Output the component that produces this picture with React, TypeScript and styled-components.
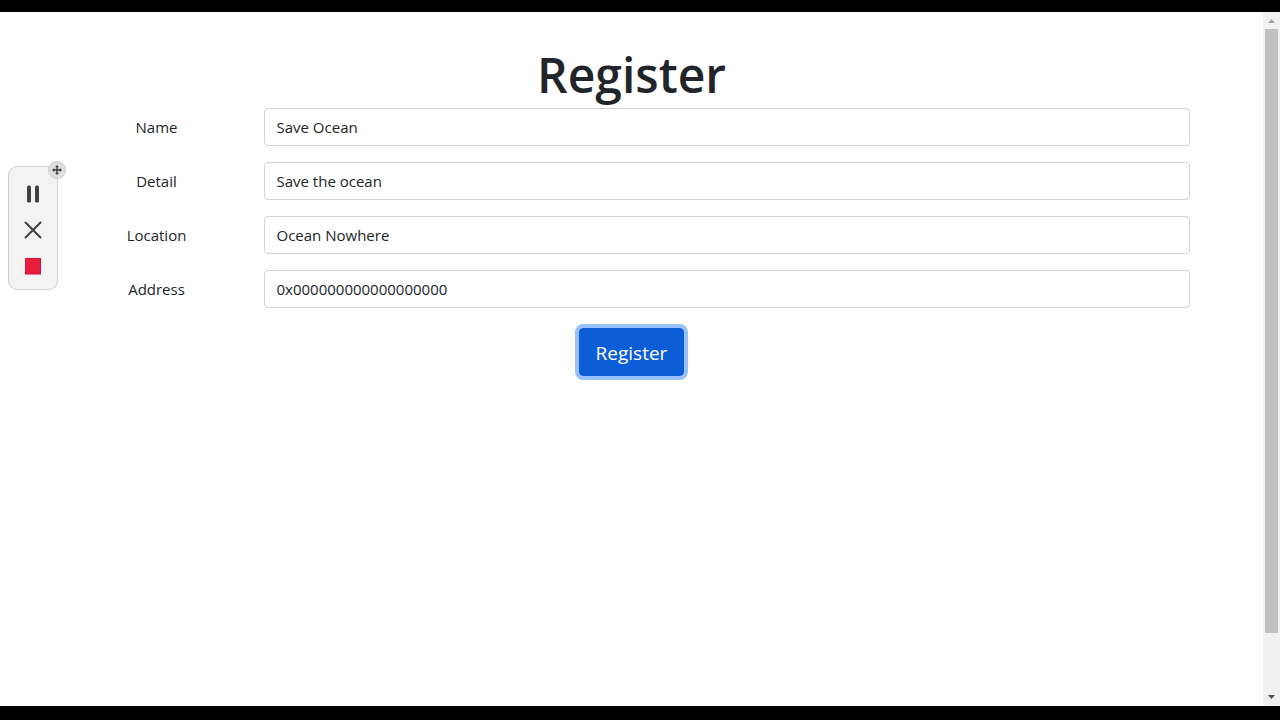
import React from "react";
import styled, { createGlobalStyle } from "styled-components";

const GlobalStyle = createGlobalStyle`
  *, *::before, *::after { box-sizing: border-box; }
  body {
    margin: 0;
    background: #fff;
    color: #212529;
    font-family: "Open Sans", "Noto Sans", sans-serif;
    font-size: 15px;
    line-height: 24px;
  }
`;

const Screen = styled.div`
  display: flex;
  min-height: 100vh;
  border-top: 12px solid #000;
  border-bottom: 14px solid #000;
  position: relative;
`;

const Page = styled.main`
  flex: 1;
  min-width: 0;
  padding-top: 32px;
`;

const Container = styled.form`
  max-width: 1140px;
  margin: 0 auto;
  text-align: center;
`;

const Title = styled.h1`
  margin: 0 0 2px;
  font-size: 48px;
  line-height: 62px;
  font-weight: 600;
`;

const Row = styled.div`
  display: grid;
  grid-template-columns: 1fr 5fr;
  margin-bottom: 16px;
`;

const Label = styled.label`
  padding: 7px 12px;
`;

const Field = styled.div`
  padding: 0 12px;
`;

const Input = styled.input`
  display: block;
  width: 100%;
  height: 38px;
  padding: 6px 12px;
  border: 1px solid #ced4da;
  border-radius: 4px;
  background: #fff;
  color: #212529;
  font: inherit;
`;

const SubmitButton = styled.button`
  height: 56px;
  padding: 1px 17px 0;
  border: 4px solid #98c1fe;
  border-radius: 8px;
  background: #0b5ed7;
  background-clip: padding-box;
  color: #fff;
  font: inherit;
  font-size: 19px;
  outline: none;
`;

const ScrollTrack = styled.div`
  display: flex;
  flex-direction: column;
  width: 17px;
  padding: 0 2px;
  background: #f1f1f1;
`;

const ScrollArrow = styled.svg`
  display: block;
  width: 13px;
  height: 17px;
`;

const ScrollThumb = styled.div`
  flex: 604;
  background: #c1c1c1;
`;

const ScrollRest = styled.div`
  flex: 56;
`;

const Recorder = styled.div`
  position: absolute;
  top: 154px;
  left: 8px;
  display: flex;
  flex-direction: column;
  align-items: center;
  gap: 12px;
  width: 50px;
  height: 124px;
  padding-top: 15px;
  border: 1px solid #cfcfcf;
  border-radius: 9px;
  background: #f3f3f3;
`;

const ToolButton = styled.button`
  width: 24px;
  height: 24px;
  padding: 0;
  border: 0;
  background: none;
  svg { display: block; }
`;

const MoveHandle = styled.button`
  position: absolute;
  top: -6px;
  right: -9px;
  width: 18px;
  height: 18px;
  padding: 0;
  border: 1px solid #cbcbcb;
  border-radius: 50%;
  background: #dedede;
  svg { display: block; }
`;

const fields = [
  { id: "name", label: "Name", value: "Save Ocean" },
  { id: "detail", label: "Detail", value: "Save the ocean" },
  { id: "location", label: "Location", value: "Ocean Nowhere" },
  { id: "address", label: "Address", value: "0x000000000000000000" },
];

export default function App() {
  return (
    <>
      <GlobalStyle />
      <Screen>
        <Page>
          <Container onSubmit={(e: React.FormEvent) => e.preventDefault()}>
            <Title>Register</Title>
            {fields.map((f) => (
              <Row key={f.id}>
                <Label htmlFor={f.id}>{f.label}</Label>
                <Field>
                  <Input id={f.id} type="text" defaultValue={f.value} />
                </Field>
              </Row>
            ))}
            <SubmitButton type="submit">Register</SubmitButton>
          </Container>
        </Page>
        <ScrollTrack aria-hidden="true">
          <ScrollArrow viewBox="0 0 13 17">
            <path d="M3 11h7L6.500 7z" fill="#a3a3a3" />
          </ScrollArrow>
          <ScrollThumb />
          <ScrollRest />
          <ScrollArrow viewBox="0 0 13 17">
            <path d="M3 6h7L6.500 10z" fill="#505050" />
          </ScrollArrow>
        </ScrollTrack>
        <Recorder role="toolbar" aria-label="Recording controls">
          <ToolButton type="button" aria-label="Pause">
            <svg width="24" height="24" viewBox="0 0 24 24" fill="#404040">
              <rect x="6" y="3.500" width="4" height="17" rx="1.500" />
              <rect x="14" y="3.500" width="4" height="17" rx="1.500" />
            </svg>
          </ToolButton>
          <ToolButton type="button" aria-label="Cancel">
            <svg width="24" height="24" viewBox="0 0 24 24" stroke="#404040" strokeWidth="2" strokeLinecap="round">
              <path d="M4.500 4.500l15 15M19.500 4.500L4.500 19.500" />
            </svg>
          </ToolButton>
          <ToolButton type="button" aria-label="Stop">
            <svg width="24" height="24" viewBox="0 0 24 24">
              <rect x="4.500" y="4.500" width="15" height="15.500" fill="#e91c3c" stroke="#d2143a" />
            </svg>
          </ToolButton>
          <MoveHandle type="button" aria-label="Move controls">
            <svg width="16" height="16" viewBox="0 0 16 16">
              <path d="M8 4.500v7M4.500 8h7" stroke="#383838" strokeWidth="1.300" />
              <path d="M8 3l2 2.200H6zM8 13l2-2.200H6zM3 8l2.200-2v4zM13 8l-2.200-2v4z" fill="#383838" />
            </svg>
          </MoveHandle>
        </Recorder>
      </Screen>
    </>
  );
}
